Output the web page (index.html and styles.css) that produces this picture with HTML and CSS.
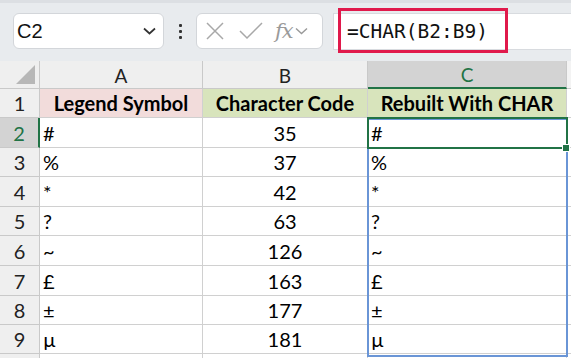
FILE: index.html
```html
<!DOCTYPE html>
<html>
<head>
<meta charset="utf-8">
<link rel="stylesheet" href="styles.css">
</head>
<body>
<div class="app">
  <div class="toolbar">
    <div class="namebox">
      <span class="name">C2</span>
      <svg class="chev" width="13" height="8" viewBox="0 0 13 8"><path d="M1 1.5 L6.5 6.5 L12 1.5" fill="none" stroke="#333" stroke-width="1.7"/></svg>
    </div>
    <div class="dots"><span></span><span></span><span></span></div>
    <div class="fxbox">
      <svg width="20" height="20" viewBox="0 0 20 20"><path d="M2 2 L18 18 M18 2 L2 18" stroke="#a8a8a8" stroke-width="1.5" fill="none"/></svg>
      <svg width="24" height="20" viewBox="0 0 24 20"><path d="M1 10 L8 17 L23 2" stroke="#a8a8a8" stroke-width="1.5" fill="none"/></svg>
      <span class="fx">fx</span>
      <svg width="13" height="8" viewBox="0 0 13 8"><path d="M1 1.5 L6.5 6.5 L12 1.5" fill="none" stroke="#999" stroke-width="1.4"/></svg>
    </div>
    <div class="formula">
      <span class="ftext">=CHAR(B2:B9)</span>
      <div class="highlight"></div>
    </div>
  </div>
  <div class="sheet">
    <div class="grid">
      <div class="corner"><div class="tri"></div></div>
      <div class="colh">A</div>
      <div class="colh">B</div>
      <div class="colh active">C</div>
      <div class="colh rest"></div>

      <div class="rowh">1</div>
      <div class="cell head pink">Legend Symbol</div>
      <div class="cell head green">Character Code</div>
      <div class="cell head green">Rebuilt With CHAR</div>
      <div class="cell rest"></div>

      <div class="rowh active">2</div>
      <div class="cell">#</div>
      <div class="cell num">35</div>
      <div class="cell">#</div>
      <div class="cell rest"></div>

      <div class="rowh">3</div>
      <div class="cell">%</div>
      <div class="cell num">37</div>
      <div class="cell">%</div>
      <div class="cell rest"></div>

      <div class="rowh">4</div>
      <div class="cell">*</div>
      <div class="cell num">42</div>
      <div class="cell">*</div>
      <div class="cell rest"></div>

      <div class="rowh">5</div>
      <div class="cell">?</div>
      <div class="cell num">63</div>
      <div class="cell">?</div>
      <div class="cell rest"></div>

      <div class="rowh">6</div>
      <div class="cell">~</div>
      <div class="cell num">126</div>
      <div class="cell">~</div>
      <div class="cell rest"></div>

      <div class="rowh">7</div>
      <div class="cell">£</div>
      <div class="cell num">163</div>
      <div class="cell">£</div>
      <div class="cell rest"></div>

      <div class="rowh">8</div>
      <div class="cell">±</div>
      <div class="cell num">177</div>
      <div class="cell">±</div>
      <div class="cell rest"></div>

      <div class="rowh">9</div>
      <div class="cell">µ</div>
      <div class="cell num">181</div>
      <div class="cell">µ</div>
      <div class="cell rest"></div>

      <div class="rowh"></div>
      <div class="cell"></div>
      <div class="cell"></div>
      <div class="cell"></div>
      <div class="cell rest"></div>
    </div>
    <div class="spill"></div>
    <div class="selection"><div class="handle"></div></div>
  </div>
</div>
</body>
</html>
```
FILE: styles.css
```css
* { box-sizing: border-box; }
html, body { margin: 0; padding: 0; }
body {
  width: 571px;
  height: 358px;
  overflow: hidden;
  background: #ffffff;
  font-family: "Lato", "Liberation Sans", sans-serif;
  color: #000;
}
.app { width: 571px; height: 358px; overflow: hidden; }

.toolbar {
  height: 61px;
  background: #e8ebee;
  border-top: 3px solid #dcdfe3;
  display: flex;
  align-items: flex-start;
  padding-top: 10px;
  padding-left: 13px;
  position: relative;
}
.namebox {
  width: 151px;
  height: 36px;
  background: #fff;
  border: 1px solid #d3d6da;
  border-radius: 6px;
  display: flex;
  align-items: center;
  justify-content: space-between;
  padding: 0 7px 0 3px;
}
.name { font-family: "Liberation Sans", sans-serif; font-size: 20px; color: #111; }
.dots {
  width: 32px;
  height: 36px;
  display: flex;
  flex-direction: column;
  align-items: center;
  justify-content: center;
  gap: 3px;
}
.dots span { width: 3px; height: 3px; background: #333; border-radius: 1px; }
.fxbox {
  width: 127px;
  height: 36px;
  background: #fff;
  border: 1px solid #d3d6da;
  border-radius: 6px;
  display: flex;
  align-items: center;
  padding-left: 8px;
  gap: 12px;
}
.fxbox svg:nth-child(2) { margin-left: 2px; }
.fx {
  font-family: "DejaVu Serif", "Liberation Serif", serif;
  font-style: italic;
  font-size: 21px;
  color: #9a9a9a;
  margin-left: 0px;
  margin-right: -10px;
  letter-spacing: -1px;
}
.formula {
  margin-left: 10px;
  flex: 1;
  height: 37px;
  background: #fff;
  border-top: 1px solid #d8dbdf;
  border-left: 1px solid #d8dbdf;
  border-bottom: 1px solid #d8dbdf;
  display: flex;
  align-items: center;
  padding-left: 13px;
  position: relative;
}
.ftext {
  font-family: "DejaVu Sans Mono", "Liberation Mono", monospace;
  font-size: 19.5px;
  color: #111;
}
.highlight {
  position: absolute;
  left: 4px;
  top: -6px;
  width: 170px;
  height: 45px;
  border: 3px solid #e0194b;
}

.sheet { position: relative; }
.grid {
  display: grid;
  grid-template-columns: 40px 163px 165px 199px 4px;
  grid-template-rows: 28px 29px 30px 29px 30px 29px 30px 30px 29px 29px 20px;
}
.corner {
  background: #efefef;
  border-right: 1px solid #c9c9c9;
  border-bottom: 1px solid #c9c9c9;
  position: relative;
}
.tri {
  position: absolute;
  right: 4px;
  bottom: 4px;
  width: 0; height: 0;
  border-left: 19px solid transparent;
  border-bottom: 19px solid #b7b7b7;
}
.colh {
  background: #efefef;
  border-right: 1px solid #c9c9c9;
  border-bottom: 1px solid #c9c9c9;
  font-family: "Lato", "Liberation Sans", sans-serif;
  font-size: 19px;
  color: #222;
  display: flex;
  align-items: center;
  justify-content: center;
  padding-top: 1px;
}
.colh.active {
  background: #d3d3d3;
  color: #217346;
  border-bottom: 2px solid #217346;
}
.colh.rest { background: #f3f3f3; border-right: none; }
.rowh {
  background: #efefef;
  border-right: 1px solid #c9c9c9;
  border-bottom: 1px solid #c9c9c9;
  font-size: 20px;
  color: #222;
  display: flex;
  align-items: center;
  justify-content: center;
}
.rowh.active {
  background: #d3d3d3;
  color: #217346;
  border-right: 2px solid #217346;
}
.cell {
  border-right: 1px solid #d0d0d0;
  border-bottom: 1px solid #d0d0d0;
  font-size: 20px;
  display: flex;
  align-items: center;
  padding: 0 3px;
  white-space: nowrap;
  overflow: hidden;
}
.cell.rest { border-right: none; }
.cell.num { justify-content: center; }
.cell.head { font-weight: 700; justify-content: center; }
.pink { background: #f2dcdb; }
.green { background: #d8e4bc; }

.spill {
  position: absolute;
  left: 367px;
  top: 57px;
  width: 201px;
  height: 239px;
  border: 2px solid #6a95d6;
}
.selection {
  position: absolute;
  left: 367px;
  top: 56px;
  width: 201px;
  height: 32px;
  border: 2px solid #217346;
}
.handle {
  position: absolute;
  right: -4px;
  bottom: -5px;
  width: 8px;
  height: 8px;
  background: #217346;
  border: 1px solid #fff;
}
```
